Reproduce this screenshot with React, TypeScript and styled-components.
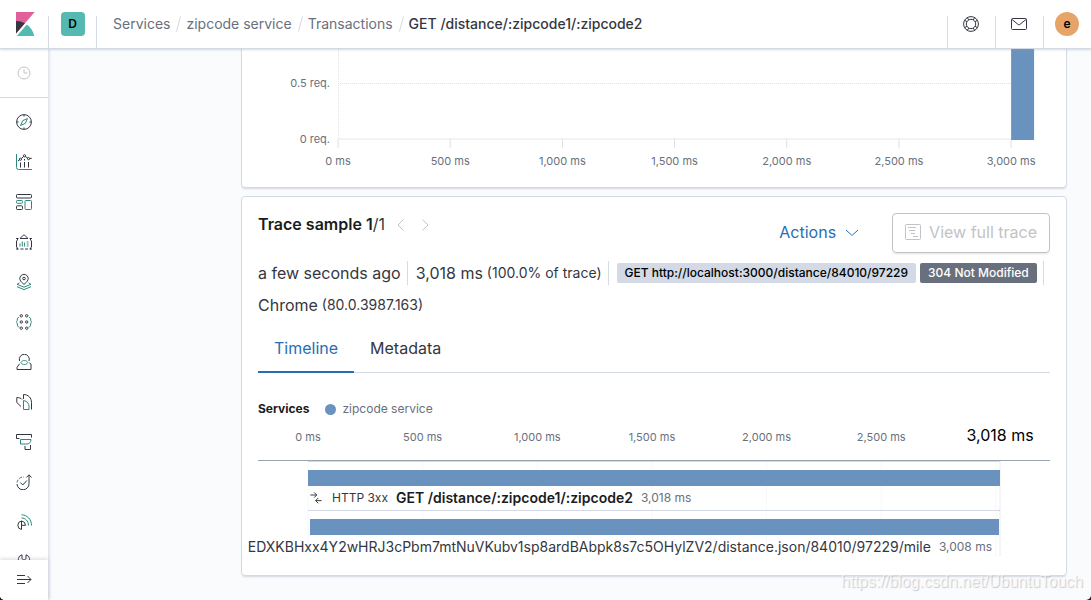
import React from "react";
import styled, { createGlobalStyle } from "styled-components";

const c = {
  ink: "#343741",
  title: "#1a1c21",
  sub: "#69707d",
  line: "#d3dae6",
  blue: "#256fb5",
  bar: "#6a92be",
  teal: "#2b897d",
  page: "#fafbfd",
  off: "#c2c3c6",
};

const GlobalStyle = createGlobalStyle`
  * { box-sizing: border-box; }
  html { background: #1d1e24; }
  body {
    margin: 0;
    font-family: Inter, "Liberation Sans", sans-serif;
    font-size: 16px;
    line-height: 24px;
    color: ${c.ink};
  }
  button { font: inherit; color: inherit; background: none; border: 0; padding: 0; cursor: pointer; }
  svg { display: block; flex: none; }
`;

const Shell = styled.div`
  position: relative;
  display: flex;
  flex-direction: column;
  height: 100vh;
  overflow: hidden;
  background: ${c.page};
  border-radius: 0 0 5px 5px;
`;

const Header = styled.header`
  position: relative;
  z-index: 2;
  display: flex;
  flex: none;
  height: 49px;
  background: #fff;
  border-bottom: 1px solid ${c.line};
  box-shadow: 0 1px 2px rgba(152, 162, 179, 0.4);
`;

const HeaderCell = styled.div<{ $rule?: "left" | "right" }>`
  display: flex;
  align-items: center;
  justify-content: center;
  width: ${(p) => (p.$rule === "right" ? 49 : 48)}px;
  height: 48px;
  margin-right: ${(p) => (p.$rule === "right" ? -1 : 0)}px;
  background: ${(p) =>
    p.$rule
      ? `linear-gradient(${c.line}, ${c.line}) ${p.$rule} bottom / 1px 32px no-repeat`
      : "none"};
`;

const SpaceBadge = styled.button`
  width: 24px;
  height: 24px;
  border-radius: 4px;
  background: #54b9b1;
  color: #000;
  font-size: 12px;
  font-weight: 600;
`;

const UserBadge = styled(SpaceBadge)`
  border-radius: 50%;
  background: #e7a468;
`;

const Crumbs = styled.nav`
  display: flex;
  flex: 1;
  align-items: center;
  min-width: 0;
  padding-left: 17px;
  font-size: 14px;
  white-space: nowrap;
`;

const Crumb = styled.a`
  color: ${c.sub};
  text-decoration: none;
`;

const CurrentCrumb = styled.span`
  color: ${c.ink};
  font-weight: 500;
`;

const Slash = styled.span`
  width: 1px;
  height: 16px;
  margin: 0 7px 0 8px;
  background: ${c.line};
  transform: rotate(15deg);
`;

const Body = styled.div`
  display: flex;
  flex: 1;
  min-height: 0;
`;

const Sidebar = styled.aside`
  position: relative;
  z-index: 1;
  display: flex;
  flex: none;
  flex-direction: column;
  width: 48px;
  background: #fff;
  box-shadow: 1px 0 3px rgba(152, 162, 179, 0.4);
`;

const RecentButton = styled.button`
  display: flex;
  flex: none;
  align-items: center;
  justify-content: center;
  height: 49px;
  border-bottom: 1px solid ${c.line};
  color: ${c.off};
`;

const NavList = styled.nav`
  flex: 1;
  min-height: 0;
  padding-top: 4px;
  overflow: hidden;
`;

const NavLink = styled.a`
  display: flex;
  align-items: center;
  justify-content: center;
  height: 40px;
  color: ${c.ink};
`;

const CollapseButton = styled.button`
  display: flex;
  flex: none;
  align-items: center;
  justify-content: center;
  height: 40px;
  background: #fff;
  box-shadow: 0 -1px 4px rgba(152, 162, 179, 0.4);
  color: ${c.ink};
`;

const Main = styled.main`
  display: flex;
  flex: 1;
  flex-direction: column;
  gap: 8px;
  min-width: 0;
  padding: 0 24px 24px 193px;
  overflow: hidden;
`;

const Panel = styled.section<{ $continued?: boolean }>`
  flex: none;
  padding: ${(p) => (p.$continued ? "0 16px 16px" : "16px")};
  background: #fff;
  border: 1px solid ${c.line};
  border-top-width: ${(p) => (p.$continued ? 0 : 1)}px;
  border-radius: ${(p) => (p.$continued ? "0 0 4px 4px" : "4px")};
  box-shadow: 0 2px 2px -1px rgba(152, 162, 179, 0.4);
`;

const ChartArea = styled.div`
  padding: 0 16px 0 80px;
`;

const Plot = styled.svg`
  width: 100%;
  overflow: visible;
`;

const AxisText = styled.text`
  fill: ${c.sub};
  font-size: 11px;
`;

const TotalText = styled.text`
  fill: #000;
  font-size: 16px;
`;

const TraceHead = styled.div`
  display: flex;
  height: 40px;
`;

const TraceTitle = styled.h2`
  margin: 0;
  color: ${c.title};
  font-size: 16px;
  font-weight: 600;
  line-height: 22px;
`;

const TraceTotal = styled.span`
  color: ${c.ink};
  font-weight: 400;
`;

const Pager = styled.div`
  display: flex;
  gap: 8px;
  height: 24px;
  margin-left: 8px;
  color: ${c.off};
`;

const PagerButton = styled.button`
  display: flex;
  align-items: center;
  justify-content: center;
  width: 16px;
`;

const HeadActions = styled.div`
  display: flex;
  gap: 20px;
  margin-left: auto;
`;

const ActionsButton = styled.button`
  display: flex;
  align-items: center;
  gap: 8px;
  padding: 0 12px 2px;
  color: ${c.blue};
`;

const OutlineButton = styled(ActionsButton)`
  border: 1px solid ${c.off};
  border-radius: 4px;
  box-shadow: 0 2px 2px -1px rgba(152, 162, 179, 0.3);
  color: ${c.off};
`;

const Summary = styled.div`
  display: flex;
  flex-wrap: wrap;
  gap: 8px 0;
  margin: 8px -8px 8px 0;
  white-space: nowrap;
`;

const SummaryItem = styled.div<{ $last?: boolean }>`
  display: flex;
  align-items: center;
  gap: 4px;
  height: 24px;
  margin-right: 8px;
  padding-right: ${(p) => (p.$last ? 0 : 6)}px;
  border-right: ${(p) => (p.$last ? "0" : `1px solid ${c.line}`)};
`;

const Small = styled.span`
  font-size: 14px;
`;

const Badge = styled.span<{ $dark?: boolean }>`
  height: 20px;
  padding: 0 8px;
  border-radius: 2px;
  background: ${(p) => (p.$dark ? c.sub : c.line)};
  color: ${(p) => (p.$dark ? "#fff" : "#000")};
  font-size: 12px;
  font-weight: 500;
  line-height: 20px;
`;

const Tabs = styled.div`
  display: flex;
  height: 48px;
  box-shadow: inset 0 -1px ${c.line};
`;

const Tab = styled.button<{ $on?: boolean }>`
  padding: 0 16px 2px;
  box-shadow: ${(p) => (p.$on ? `inset 0 -2px ${c.blue}` : "none")};
  color: ${(p) => (p.$on ? c.blue : c.ink)};
`;

const Legend = styled.div`
  display: flex;
  align-items: center;
  margin-top: 24px;
  color: ${c.sub};
  font-size: 12px;
`;

const LegendTitle = styled.strong`
  margin-right: 16px;
  color: ${c.title};
  font-weight: 700;
`;

const Dot = styled.span`
  width: 11px;
  height: 11px;
  margin-right: 6px;
  border-radius: 50%;
  background: ${c.bar};
`;

const TimeAxis = styled.div`
  height: 40px;
  padding: 0 50px;
  border-bottom: 1px solid #98a2b3;
`;

const Waterfall = styled.div`
  display: grid;
  margin: 0 50px;
  > * { grid-area: 1 / 1; }
`;

const Spans = styled.div`
  display: flex;
  flex-direction: column;
  min-width: 0;
`;

const SpanRow = styled.div`
  height: 49px;
  padding-top: 8px;
  border-top: 1px solid ${c.line};
`;

const SpanBar = styled.div<{ $inset?: boolean }>`
  height: 16px;
  margin: ${(p) => (p.$inset ? "0 1px 0 2px" : "0")};
  background: ${c.bar};
`;

const SpanLabel = styled.div<{ $end?: boolean }>`
  display: flex;
  align-items: center;
  justify-content: ${(p) => (p.$end ? "flex-end" : "flex-start")};
  gap: 8px;
  padding: ${(p) => (p.$end ? "0 8px 0 0" : "0 0 0 2px")};
  font-size: 14px;
  white-space: nowrap;
`;

const SpanStatus = styled.span`
  margin-left: 2px;
  font-size: 12px;
`;

const SpanName = styled.strong`
  color: ${c.title};
  font-weight: 600;
`;

const SpanTime = styled.span`
  color: ${c.sub};
  font-size: 12px;
`;

const Watermark = styled.div`
  position: absolute;
  right: 8px;
  bottom: 8px;
  z-index: 3;
  color: rgba(255, 255, 255, 0.7);
  font-family: "Liberation Sans", sans-serif;
  font-size: 16px;
  line-height: 20px;
  text-shadow: 1px 1px 1px rgba(0, 0, 0, 0.2);
`;

const Icon = ({ size = 16, children }: { size?: number; children: React.ReactNode }) => (
  <svg
    width={size}
    height={size}
    viewBox="0 0 16 16"
    fill="none"
    stroke="currentColor"
    strokeWidth="1"
    aria-hidden="true"
  >
    {children}
  </svg>
);

const t = c.teal;

const navItems: { name: string; icon: React.ReactNode }[] = [
  {
    name: "Discover",
    icon: (
      <>
        <circle cx="8" cy="8" r="7.4" />
        <path d="M8 1v1.500M8 13.500V15M1 8h1.500M13.500 8H15" />
        <path stroke={t} d="M11.500 4.500 9.300 9.300 4.500 11.500 6.700 6.700z" />
      </>
    ),
  },
  {
    name: "Visualize",
    icon: (
      <>
        <path stroke={t} d="M.5 0v13.500a2 2 0 0 0 2 2H16" />
        <path d="M4.500 8.500v5M8.500 5v1.500M8.500 8v5.500M12.500 8v5.500" />
        <path d="M2 6.800 3.700 5.700M5.300 4.600 7.700 2.500M9.300 2.500l2.400 1.500M13.500 4.800l2.300-.6" />
        <circle cx="4.500" cy="5.200" r="1.100" />
        <circle cx="8.500" cy="1.800" r="1.100" />
        <circle cx="12.500" cy="4.600" r="1.100" />
      </>
    ),
  },
  {
    name: "Dashboard",
    icon: (
      <>
        <rect x=".5" y=".5" width="15" height="3.500" rx=".8" />
        <rect x=".5" y="6.500" width="6" height="2.800" rx=".8" stroke={t} />
        <rect x=".5" y="11.800" width="6" height="3.700" rx=".8" />
        <rect x="9" y="6.500" width="6.500" height="9" rx=".8" stroke={t} />
      </>
    ),
  },
  {
    name: "Canvas",
    icon: (
      <>
        <path d="M4.500 4 7.300 1.200a1 1 0 0 1 1.400 0L11.500 4" />
        <path d="M0 4.500h2.500M4 4.500h8M13.500 4.500H16M1.500 4.500v2M14.500 4.500v2M.5 6.500v7M15.500 6.500v7M1.500 13.500v2M14.500 13.500v2M0 15h2.500M4.500 15h3M9 15h3M13.500 15H16" />
        <path stroke={t} d="M4 9.500V12.500M6.300 7.500v5M8.600 8.500v4M10.800 8h1.700M10.800 10h1.700M10.800 12h1.700" />
      </>
    ),
  },
  {
    name: "Maps",
    icon: (
      <>
        <path d="M8 10.500C5.500 8 3.800 6.500 3.800 4.600a4.200 4.200 0 0 1 8.400 0c0 1.900-1.700 3.400-4.200 5.900z" />
        <circle cx="8" cy="4.500" r="1.300" />
        <path stroke={t} d="M3.500 8.800 1 10.300 8 13.200l7-2.900-2.500-1.500M1 12.700l7 2.900 7-2.900" />
      </>
    ),
  },
  {
    name: "Machine Learning",
    icon: (
      <>
        {[1.8, 8, 14.2].map((y) => (
          <g key={y}>
            <circle cx="5.300" cy={y} r="1.200" />
            <circle cx="10.700" cy={y} r="1.200" />
          </g>
        ))}
        <path
          stroke={t}
          d="M2.800 3.300C1.500 3.500 1.300 4.500 1.300 6c0 1.200-.8 1.300-.8 2s.8.800.8 2c0 1.800.4 3 2.200 3.200M13.200 3.300c1.300.2 1.500 1.200 1.500 2.700 0 1.200.8 1.300.8 2s-.8.800-.8 2c0 1.800-.4 3-2.200 3.200"
        />
      </>
    ),
  },
  {
    name: "Infrastructure",
    icon: (
      <>
        <path d="M3.600 7A5 5 0 1 1 13 7M3.600 9.800 1 13.300v2.200h14v-5.500l-1.500-1" />
        <path stroke={t} d="M4.800 8.600c1.600-2.800 5.500-2.800 7.100 0-1.600 2.600-5.500 2.600-7.100 0z" />
      </>
    ),
  },
  {
    name: "Logs",
    icon: (
      <>
        <path d="M5 12.500.8 8.500v-5c2.400 0 4.200.6 5.200 2M7.500 5V.5c4.800 0 8 3.500 8 8v7" />
        <path stroke={t} d="M7.500 15.500v-9c3.500.5 5.500 3 5.500 6v3z" />
      </>
    ),
  },
  {
    name: "APM",
    icon: (
      <>
        <path d="M3.500 4.500H.5v-4h15v3M9 12v3.500h5.500V11" />
        <path stroke={t} d="M4.500 10V5.500h10.500c0 2.500-1.500 4.500-4 4.500z" />
      </>
    ),
  },
  {
    name: "Uptime",
    icon: (
      <>
        <path d="M13 1v8.500a6 6 0 0 1-12 .5M10.300 3.500 13 .8l2.500 2.700M4.300 8.500 6.800 11l4-4.500" />
        <path stroke={t} d="M1 8.500A6.500 6.500 0 0 1 8 3" strokeDasharray="3 1.500" />
      </>
    ),
  },
  {
    name: "SIEM",
    icon: (
      <>
        <path d="M5.500 7v8.500M5.500 7a4.300 4.300 0 0 0 0 8.500M5.500 7a4.500 4.500 0 0 1 4 4.300h-4" />
        <path stroke={t} d="M5.500 4c4 0 7 3 7 7.500M5.500.8c5.500 0 10 4.500 10 10.700" />
      </>
    ),
  },
  {
    name: "Dev Tools",
    icon: (
      <path d="M6 .8v4l2 1.200 2-1.200v-4a5 5 0 0 1 1.500 9v5.700h-7V9.800A5 5 0 0 1 6 .8z" />
    ),
  },
];

const ticks = [0, 500, 1000, 1500, 2000, 2500, 3000];
const ms = (n: number) => `${n.toLocaleString("en-US")} ms`;
const pct = (n: number, max: number) => `${(n / max) * 100}%`;
const CHART_MAX = 3102;
const TRACE_MAX = 3018;

const DistributionChart = () => (
  <ChartArea>
    <Plot height="122" role="img" aria-label="Transactions duration distribution">
      <g stroke="#e0e2e8" strokeDasharray="1 1">
        <line x1="0.500" x2="0.500" y1="0" y2="90" />
        <line x1="0" x2="100%" y1="34.500" y2="34.500" />
      </g>
      <line x1="0" x2="100%" y1="90" y2="90" stroke="#e6e8ec" />
      <AxisText x="-8" y="38" textAnchor="end">0.5 req.</AxisText>
      <AxisText x="-8" y="94" textAnchor="end">0 req.</AxisText>
      {ticks.map((v) => (
        <g key={v}>
          <line x1={pct(v, CHART_MAX)} x2={pct(v, CHART_MAX)} y1="90" y2="99" stroke="#dcdfe5" />
          <AxisText x={pct(v, CHART_MAX)} y="116" textAnchor="middle">{ms(v)}</AxisText>
        </g>
      ))}
      <rect x={pct(3000, CHART_MAX)} y="0" width="3.300%" height="91" fill={c.bar} />
    </Plot>
  </ChartArea>
);

export default function App() {
  return (
    <>
      <GlobalStyle />
      <Shell>
        <Header>
          <HeaderCell $rule="right">
            <svg width="24" height="24" viewBox="0 0 32 32" aria-label="Kibana">
              <path fill="#e0609b" d="M4 0v28.789L28.935.017z" />
              <path fill="#343741" d="M4 12v16.789l11.906-13.738A24.721 24.721 0 0 0 4 12" />
              <path fill="#54b9b1" d="M18.479 16.664 6.268 30.754l-1.073 1.237h23.191c-1.252-6.292-4.883-11.719-9.907-15.328" />
            </svg>
          </HeaderCell>
          <HeaderCell $rule="right">
            <SpaceBadge>D</SpaceBadge>
          </HeaderCell>
          <Crumbs aria-label="Breadcrumbs">
            <Crumb href="#services">Services</Crumb>
            <Slash />
            <Crumb href="#zipcode">zipcode service</Crumb>
            <Slash />
            <Crumb href="#transactions">Transactions</Crumb>
            <Slash />
            <CurrentCrumb>GET /distance/:zipcode1/:zipcode2</CurrentCrumb>
          </Crumbs>
          <HeaderCell as="button" $rule="left" aria-label="Help">
            <Icon>
              <circle cx="8" cy="8" r="7.400" />
              <circle cx="8" cy="8" r="4.700" />
              <path d="M12 5.700l2.500-1.400M10.300 4l1.400-2.500M5.700 4 4.300 1.500M4 5.700 1.500 4.300M4 10.300l-2.500 1.400M5.700 12l-1.400 2.500M10.300 12l1.400 2.500M12 10.300l2.500 1.400" />
            </Icon>
          </HeaderCell>
          <HeaderCell as="button" $rule="left" aria-label="News">
            <Icon>
              <rect x=".5" y="2.500" width="15" height="11" rx="1" />
              <path d="m1 3.500 6.200 5a1.300 1.300 0 0 0 1.600 0l6.200-5" />
            </Icon>
          </HeaderCell>
          <HeaderCell $rule="left">
            <UserBadge>e</UserBadge>
          </HeaderCell>
        </Header>
        <Body>
          <Sidebar>
            <RecentButton aria-label="Recently viewed">
              <Icon>
                <circle cx="8" cy="8" r="6" />
                <path d="M8 4v4h3.500" />
              </Icon>
            </RecentButton>
            <NavList aria-label="Apps">
              {navItems.map((n) => (
                <NavLink key={n.name} href="#" aria-label={n.name}>
                  <Icon>{n.icon}</Icon>
                </NavLink>
              ))}
            </NavList>
            <CollapseButton aria-label="Expand navigation">
              <Icon>
                <path d="M1 3.500h8M1 7.500h14M1 11.500h8M11.500 4 15 7.500 11.500 11" />
              </Icon>
            </CollapseButton>
          </Sidebar>
          <Main>
            <Panel $continued>
              <DistributionChart />
            </Panel>
            <Panel>
              <TraceHead>
                <TraceTitle>
                  Trace sample 1<TraceTotal>/1</TraceTotal>
                </TraceTitle>
                <Pager>
                  <PagerButton disabled aria-label="Previous">
                    <Icon><path d="M10.500 2.500 5 8l5.500 5.500" /></Icon>
                  </PagerButton>
                  <PagerButton disabled aria-label="Next">
                    <Icon><path d="M5.500 2.500 11 8l-5.500 5.500" /></Icon>
                  </PagerButton>
                </Pager>
                <HeadActions>
                  <ActionsButton>
                    Actions
                    <Icon><path d="m2 6 5.500 5a.7.7 0 0 0 1 0L14 6" /></Icon>
                  </ActionsButton>
                  <OutlineButton disabled>
                    <Icon>
                      <rect x=".5" y=".5" width="15" height="15" rx="1" />
                      <path d="M3 3.500h8M4 6.500h6M6 9.500h4M8 12.500h5" />
                    </Icon>
                    View full trace
                  </OutlineButton>
                </HeadActions>
              </TraceHead>
              <Summary>
                <SummaryItem>a few seconds ago</SummaryItem>
                <SummaryItem>
                  3,018 ms <Small>(100.0% of trace)</Small>
                </SummaryItem>
                <SummaryItem>
                  <Badge>GET http://localhost:3000/distance/84010/97229</Badge>
                  <Badge $dark>304 Not Modified</Badge>
                </SummaryItem>
                <SummaryItem $last>
                  Chrome <Small>(80.0.3987.163)</Small>
                </SummaryItem>
              </Summary>
              <Tabs role="tablist">
                <Tab role="tab" aria-selected="true" $on>Timeline</Tab>
                <Tab role="tab" aria-selected="false">Metadata</Tab>
              </Tabs>
              <Legend>
                <LegendTitle>Services</LegendTitle>
                <Dot />
                zipcode service
              </Legend>
              <TimeAxis>
                <Plot height="39">
                  {ticks.slice(0, 6).map((v) => (
                    <AxisText key={v} x={pct(v, TRACE_MAX)} y="20" textAnchor="middle">{ms(v)}</AxisText>
                  ))}
                  <TotalText x="100%" y="20" textAnchor="middle">3,018 ms</TotalText>
                </Plot>
              </TimeAxis>
              <Waterfall>
                <Plot height="96" aria-hidden="true">
                  {ticks.map((v) => (
                    <line key={v} x1={pct(v, TRACE_MAX)} x2={pct(v, TRACE_MAX)} y1="0" y2="96" stroke="#f7f8fb" />
                  ))}
                  <line x1="100%" x2="100%" y1="0" y2="96" stroke="#d3dae6" strokeDasharray="1 1" />
                </Plot>
                <Spans>
                  <SpanRow>
                    <SpanBar />
                    <SpanLabel>
                      <Icon size={12}>
                        <path strokeWidth="1.300" d="M.5 4H9M5.500.5 9 4 5.500 7.500M15.500 11.500H7.500M11 8l-3.500 3.500L11 15" />
                      </Icon>
                      <SpanStatus>HTTP 3xx</SpanStatus>
                      <SpanName>GET /distance/:zipcode1/:zipcode2</SpanName>
                      <SpanTime>3,018 ms</SpanTime>
                    </SpanLabel>
                  </SpanRow>
                  <SpanRow>
                    <SpanBar $inset />
                    <SpanLabel $end>
                      <span>EDXKBHxx4Y2wHRJ3cPbm7mtNuVKubv1sp8ardBAbpk8s7c5OHylZV2/distance.json/84010/97229/mile</span>
                      <SpanTime>3,008 ms</SpanTime>
                    </SpanLabel>
                  </SpanRow>
                </Spans>
              </Waterfall>
            </Panel>
          </Main>
        </Body>
        <Watermark>https://blog.csdn.net/UbuntuTouch</Watermark>
      </Shell>
    </>
  );
}
